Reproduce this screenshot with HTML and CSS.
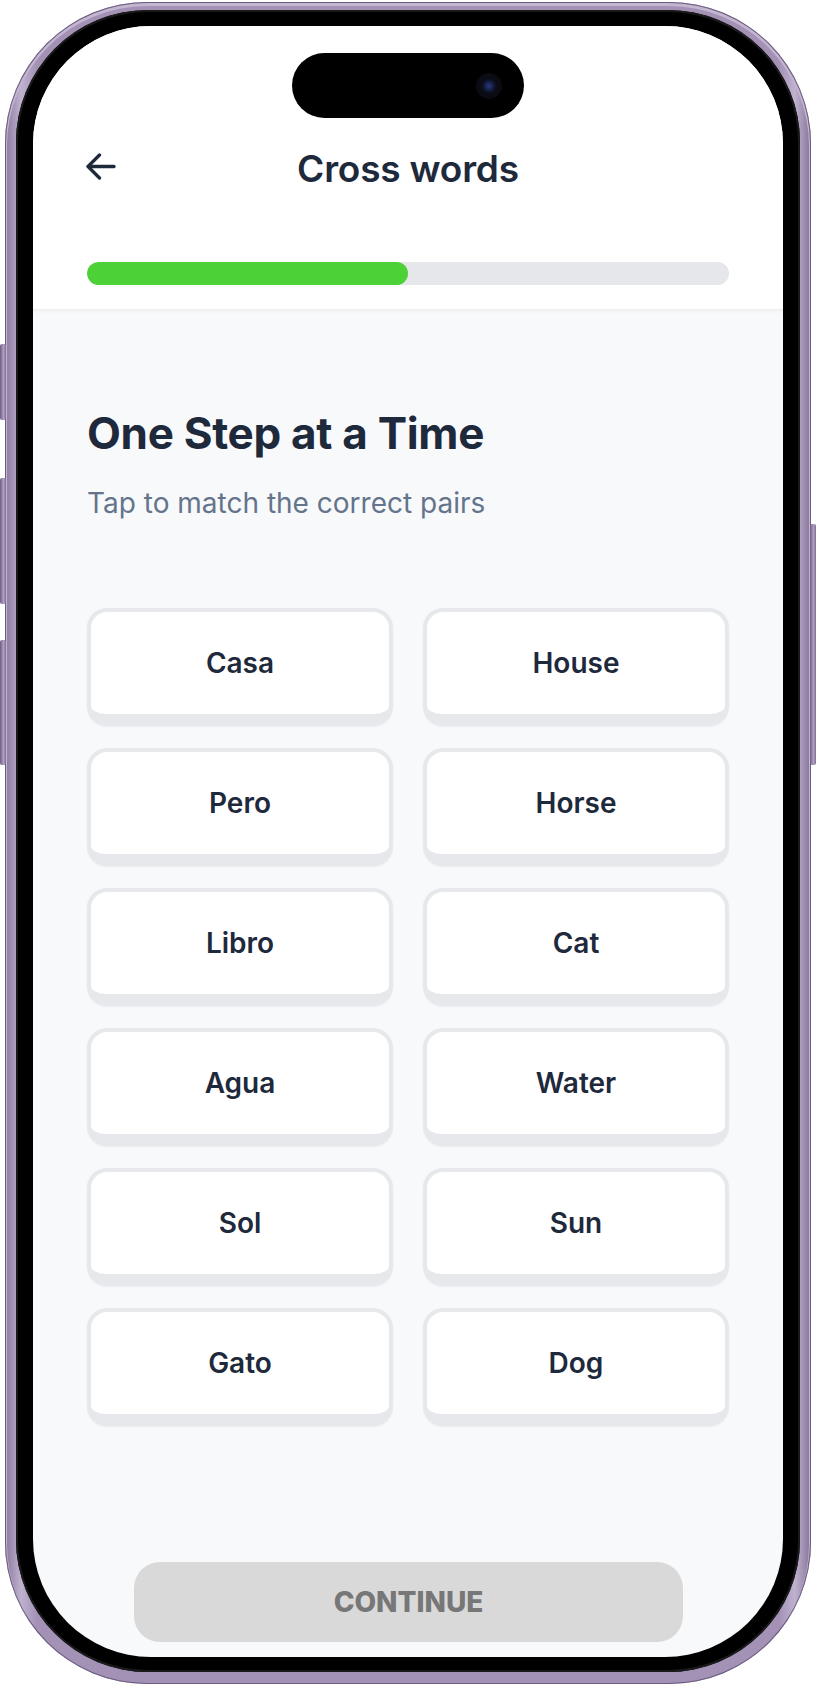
FILE: index.html
```html
<!DOCTYPE html>
<html lang="en">
<head>
    <meta charset="UTF-8">
    <meta name="viewport" content="width=device-width, initial-scale=1.0">
    <title>Cross words</title>
    <link rel="stylesheet" href="styles.css">
</head>
<body>
    <div class="device">
        <span class="side-btn left-1"></span>
        <span class="side-btn left-2"></span>
        <span class="side-btn left-3"></span>
        <span class="side-btn right-1"></span>

        <div class="bezel">
            <div class="screen">
                <div class="island">
                    <span class="camera"></span>
                </div>

                <header class="top-bar">
                    <div class="title-row">
                        <button class="back-btn" type="button" aria-label="Back">
                            <svg width="30" height="28" viewBox="0 0 30 28" fill="none" stroke="#1e293b" stroke-width="3.3" stroke-linecap="round" stroke-linejoin="round">
                                <path d="M28 13.5H2.5"/>
                                <path d="M13.5 2L2 13.5L13.5 25"/>
                            </svg>
                        </button>
                        <h1>Cross words</h1>
                        <span></span>
                    </div>
                    <div class="progress">
                        <div class="progress-fill" style="width: 50%"></div>
                    </div>
                </header>

                <main class="content">
                    <h2>One Step at a Time</h2>
                    <p class="hint">Tap to match the correct pairs</p>

                    <div class="word-grid">
                        <button class="word-card" type="button">Casa</button>
                        <button class="word-card" type="button">House</button>
                        <button class="word-card" type="button">Pero</button>
                        <button class="word-card" type="button">Horse</button>
                        <button class="word-card" type="button">Libro</button>
                        <button class="word-card" type="button">Cat</button>
                        <button class="word-card" type="button">Agua</button>
                        <button class="word-card" type="button">Water</button>
                        <button class="word-card" type="button">Sol</button>
                        <button class="word-card" type="button">Sun</button>
                        <button class="word-card" type="button">Gato</button>
                        <button class="word-card" type="button">Dog</button>
                    </div>
                </main>

                <footer class="bottom">
                    <button class="continue-btn" type="button" disabled>CONTINUE</button>
                </footer>
            </div>
        </div>
    </div>
</body>
</html>
```

FILE: styles.css
```css
body {
    margin: 0;
    background: #fff;
    font-family: 'Inter', 'Noto Sans', sans-serif;
}

/* phone mockup */
.device {
    position: relative;
    width: 806px;
    height: 1682px;
    margin: 2px 5px 0;
    padding: 8px 11px 12px;
    box-sizing: border-box;
    border-radius: 142px;
    background: linear-gradient(90deg, #8a779e 0%, #bfb2ce 2%, #a391b6 4%, #a391b6 96%, #bfb2ce 98%, #857299 100%);
    box-shadow: inset 0 0 0 1px #6c5b80, inset 0 2px 0 2px #c3b6d1;
}

.side-btn {
    position: absolute;
    width: 6px;
    background: linear-gradient(90deg, #6d5c80, #b0a1c1 60%, #7b6a8f);
    border-radius: 2px;
}

.left-1 { left: -5px; top: 342px; height: 76px; }
.left-2 { left: -5px; top: 476px; height: 126px; }
.left-3 { left: -5px; top: 638px; height: 125px; }
.right-1 { right: -5px; top: 522px; height: 241px; }

.bezel {
    height: 100%;
    padding: 16px 17px 15px;
    box-sizing: border-box;
    border-radius: 132px;
    background: #000;
    box-shadow: inset 0 0 0 2px #1a1a1a;
}

.screen {
    position: relative;
    height: 100%;
    display: flex;
    flex-direction: column;
    border-radius: 118px;
    overflow: hidden;
    background: #f8f9fb;
}

.island {
    position: absolute;
    top: 27px;
    left: 259px;
    width: 232px;
    height: 65px;
    border-radius: 33px;
    background: #000;
}

.camera {
    position: absolute;
    top: 20px;
    right: 22px;
    width: 26px;
    height: 26px;
    border-radius: 50%;
    background: radial-gradient(circle, #2a3a7a 0, #16204a 4px, #0b0d18 7px, #0a0a0f 13px);
}

/* header */
.top-bar {
    padding: 121px 54px 24px;
    background: #fff;
    border-bottom: 1px solid #eef0f3;
    box-shadow: 0 2px 4px rgba(15, 23, 42, 0.03);
}

.title-row {
    display: grid;
    grid-template-columns: 40px 1fr 40px;
    align-items: center;
}

.back-btn {
    padding: 0;
    border: none;
    background: none;
    display: flex;
    margin-top: -4px;
    margin-left: -1px;
}

h1 {
    margin: 0;
    text-align: center;
    font-size: 37px;
    line-height: 1.2;
    font-weight: 600;
    letter-spacing: -0.2px;
    color: #1e293b;
}

.progress {
    margin-top: 71px;
    height: 23px;
    border-radius: 12px;
    background: #e5e7eb;
    overflow: hidden;
}

.progress-fill {
    height: 100%;
    border-radius: 12px;
    background: #4cd137;
}

/* body */
.content {
    flex: 1;
    padding: 97px 54px 0;
}

h2 {
    margin: 0;
    font-size: 44px;
    line-height: 1.2;
    font-weight: 700;
    letter-spacing: -0.3px;
    color: #1e293b;
}

.hint {
    margin: 25px 0 0;
    font-size: 28px;
    line-height: 1.3;
    color: #64748b;
}

.word-grid {
    margin-top: 86px;
    display: grid;
    grid-template-columns: 1fr 1fr;
    gap: 22px 30px;
}

.word-card {
    height: 118px;
    padding: 0;
    border: 4px solid #e6e8ec;
    border-bottom-width: 12px;
    border-radius: 20px;
    background: #fff;
    box-shadow: 0 1px 2px rgba(15, 23, 42, 0.05);
    font-family: 'Inter', sans-serif;
    font-size: 28px;
    font-weight: 600;
    color: #1e293b;
    cursor: pointer;
}

/* footer */
.bottom {
    padding: 0 100px 15px 101px;
}

.continue-btn {
    width: 100%;
    height: 80px;
    border: none;
    border-radius: 26px;
    background: #d9d9d9;
    font-family: 'Inter', sans-serif;
    font-size: 28px;
    font-weight: 800;
    letter-spacing: 0;
    color: #777;
}
```
